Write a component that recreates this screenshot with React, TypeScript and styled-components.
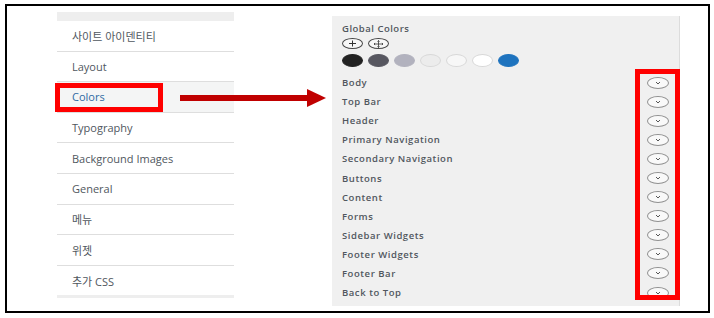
import React from "react";
import styled, { createGlobalStyle } from "styled-components";

const GlobalStyle = createGlobalStyle`
  html, body {
    margin: 0;
    padding: 0;
    background: #fff;
  }
  body {
    font-family: "Open Sans", "Noto Sans", "Noto Sans CJK KR", sans-serif;
  }
`;

const StyledFrame = styled.div`
  position: relative;
  box-sizing: border-box;
  width: 705px;
  height: 309px;
  margin: 4px 0 0 5px;
  border: 2px solid #000;
  padding: 6px 0 0 50px;
  display: flex;
  align-items: flex-start;
  background: #fff;
`;

const StyledSideMenu = styled.div`
  width: 177px;
  display: flex;
  flex-direction: column;
`;

const StyledMenuCap = styled.div<{ bottom?: boolean }>`
  height: ${({ bottom }) => (bottom ? "3px" : "9px")};
  background: #eeeeee;
`;

const StyledMenuItem = styled.div<{ active?: boolean; last?: boolean }>`
  box-sizing: border-box;
  height: ${({ last }) => (last ? "29.6px" : "30.6px")};
  display: flex;
  align-items: center;
  padding-left: 15px;
  font-size: 11px;
  color: ${({ active }) => (active ? "#2f6aa3" : "#50575e")};
  background: ${({ active }) => (active ? "#f4f5f5" : "#fff")};
  border-bottom: ${({ last }) => (last ? "none" : "1px solid #dedede")};
`;

const StyledPanel = styled.div`
  position: relative;
  box-sizing: border-box;
  width: 348px;
  height: 290px;
  margin: 4px 0 0 98px;
  padding: 6px 10px 0 10px;
  background: #f0f0f0;
  border-right: 1px solid #dcdcdc;
`;

const StyledPanelTitle = styled.div`
  font-size: 9.5px;
  font-weight: 600;
  letter-spacing: 0.5px;
  color: #50575e;
  line-height: 13px;
`;

const StyledToolRow = styled.div`
  display: flex;
  gap: 5px;
  margin-top: 3px;
`;

const StyledTool = styled.div`
  box-sizing: border-box;
  width: 21px;
  height: 11px;
  border: 1px solid #444;
  border-radius: 50%;
  display: flex;
  align-items: center;
  justify-content: center;
  background: #f7f7f7;
`;

const StyledSwatchRow = styled.div`
  display: flex;
  gap: 5px;
  margin-top: 5px;
`;

const StyledSwatch = styled.div<{ color: string }>`
  box-sizing: border-box;
  width: 21px;
  height: 13px;
  border-radius: 50%;
  background: ${({ color }) => color};
  border: 1px solid ${({ color }) => (color === "#ffffff" || color === "#f7f7f7" || color === "#ececec" ? "#d8d8d8" : color)};
`;

const StyledSectionList = styled.div`
  margin-top: 6px;
  display: flex;
  flex-direction: column;
`;

const StyledSection = styled.div`
  height: 19.1px;
  display: flex;
  align-items: center;
  justify-content: space-between;
  font-size: 9.5px;
  font-weight: 600;
  letter-spacing: 0.55px;
  color: #50575e;
`;

const StyledToggle = styled.div`
  box-sizing: border-box;
  width: 22px;
  height: 12px;
  border: 1px solid #8f8f8f;
  border-radius: 50%;
  background: #f9f9f9;
  display: flex;
  align-items: center;
  justify-content: center;
`;

const StyledRedBox = styled.div`
  position: absolute;
  box-sizing: border-box;
  border: 5px solid #ff0000;
`;

const StyledLeftMark = styled(StyledRedBox)`
  left: 48px;
  top: 77px;
  width: 108px;
  height: 29px;
`;

const StyledRightMark = styled(StyledRedBox)`
  left: 303px;
  top: 53px;
  width: 45px;
  height: 231px;
`;

const StyledArrow = styled.svg`
  position: absolute;
  left: 173px;
  top: 83px;
`;

const menu = [
  "사이트 아이덴티티",
  "Layout",
  "Colors",
  "Typography",
  "Background Images",
  "General",
  "메뉴",
  "위젯",
  "추가 CSS",
];

const swatches = [
  "#222222",
  "#575760",
  "#b2b2be",
  "#ececec",
  "#f7f7f7",
  "#ffffff",
  "#1e73be",
];

const sections = [
  "Body",
  "Top Bar",
  "Header",
  "Primary Navigation",
  "Secondary Navigation",
  "Buttons",
  "Content",
  "Forms",
  "Sidebar Widgets",
  "Footer Widgets",
  "Footer Bar",
  "Back to Top",
];

function Chevron() {
  return (
    <svg width="6" height="4" viewBox="0 0 6 4">
      <path d="M1 1 L3 3 L5 1" fill="none" stroke="#555" strokeWidth="1" />
    </svg>
  );
}

function App() {
  return (
    <>
      <GlobalStyle />
      <StyledFrame>
        <StyledSideMenu>
          <StyledMenuCap />
          {menu.map((label, i) => (
            <StyledMenuItem
              key={label}
              active={label === "Colors"}
              last={i === menu.length - 1}
            >
              {label}
            </StyledMenuItem>
          ))}
          <StyledMenuCap bottom />
        </StyledSideMenu>

        <StyledPanel>
          <StyledPanelTitle>Global Colors</StyledPanelTitle>
          <StyledToolRow>
            <StyledTool>
              <svg width="9" height="7" viewBox="0 0 9 7">
                <path d="M4.5 0.5 V6.5 M1 3.5 H8" stroke="#333" strokeWidth="1" />
              </svg>
            </StyledTool>
            <StyledTool>
              <svg width="11" height="8" viewBox="0 0 11 8">
                <path
                  d="M5.5 0.5 V7.5 M1 4 H10 M4.5 1.6 L5.5 0.5 L6.5 1.6 M4.5 6.4 L5.5 7.5 L6.5 6.4 M2.1 3 L1 4 L2.1 5 M8.9 3 L10 4 L8.9 5"
                  fill="none"
                  stroke="#333"
                  strokeWidth="0.8"
                />
              </svg>
            </StyledTool>
          </StyledToolRow>
          <StyledSwatchRow>
            {swatches.map((c) => (
              <StyledSwatch key={c} color={c} />
            ))}
          </StyledSwatchRow>
          <StyledSectionList>
            {sections.map((s) => (
              <StyledSection key={s}>
                {s}
                <StyledToggle>
                  <Chevron />
                </StyledToggle>
              </StyledSection>
            ))}
          </StyledSectionList>
          <StyledRightMark />
        </StyledPanel>

        <StyledLeftMark />
        <StyledArrow width="146" height="18" viewBox="0 0 146 18">
          <rect x="0" y="6" width="128" height="6" fill="#c00000" />
          <polygon points="127,0 146,9 127,18" fill="#c00000" />
        </StyledArrow>
      </StyledFrame>
    </>
  );
}

export default App;
